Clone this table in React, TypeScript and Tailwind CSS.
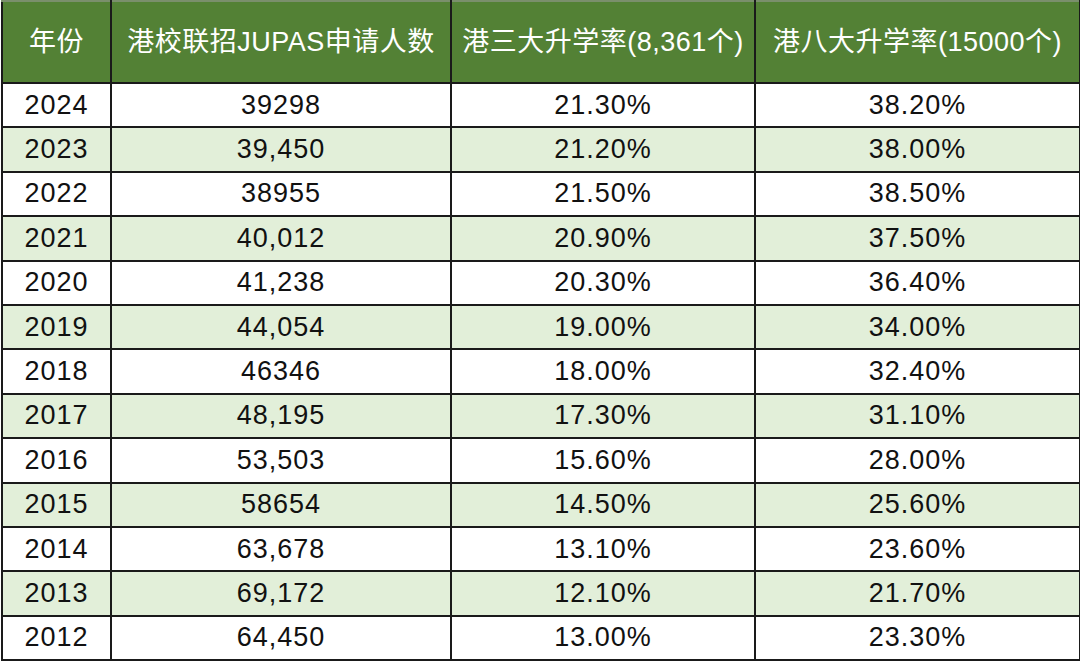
const rows: [string, string, string, string][] = [
  ['2024', '39298', '21.30%', '38.20%'],
  ['2023', '39,450', '21.20%', '38.00%'],
  ['2022', '38955', '21.50%', '38.50%'],
  ['2021', '40,012', '20.90%', '37.50%'],
  ['2020', '41,238', '20.30%', '36.40%'],
  ['2019', '44,054', '19.00%', '34.00%'],
  ['2018', '46346', '18.00%', '32.40%'],
  ['2017', '48,195', '17.30%', '31.10%'],
  ['2016', '53,503', '15.60%', '28.00%'],
  ['2015', '58654', '14.50%', '25.60%'],
  ['2014', '63,678', '13.10%', '23.60%'],
  ['2013', '69,172', '12.10%', '21.70%'],
  ['2012', '64,450', '13.00%', '23.30%'],
]

const headers = ['年份', '港校联招JUPAS申请人数', '港三大升学率(8,361个)', '港八大升学率(15000个)']

export default function App() {
  return (
    <div className="w-[1080px] h-[661px] bg-white overflow-hidden pl-[1px]">
      <table
        className="w-[1078px] table-fixed border-collapse text-center"
        style={{ fontFamily: '"Liberation Sans", "Noto Sans CJK SC", sans-serif' }}
      >
        <colgroup>
          <col className="w-[109px]" />
          <col className="w-[340px]" />
          <col className="w-[304px]" />
          <col className="w-[325px]" />
        </colgroup>
        <thead>
          <tr className="h-[82px] bg-[#538135]">
            {headers.map((h) => (
              <th
                key={h}
                className="border-2 border-[#1a1a1a] border-t-[#7a8f6c] text-white font-normal text-[27px] tracking-[0.5px] whitespace-nowrap p-0"
              >
                {h}
              </th>
            ))}
          </tr>
        </thead>
        <tbody>
          {rows.map((r, i) => (
            <tr key={r[0]} className={`h-[44.4px] ${i % 2 === 1 ? 'bg-[#e2efd9]' : 'bg-white'}`}>
              {r.map((c, j) => (
                <td
                  key={j}
                  className="border-2 border-[#1a1a1a] text-[#111] text-[27px] tracking-[1px] leading-none p-0"
                >
                  {c}
                </td>
              ))}
            </tr>
          ))}
        </tbody>
      </table>
    </div>
  )
}
